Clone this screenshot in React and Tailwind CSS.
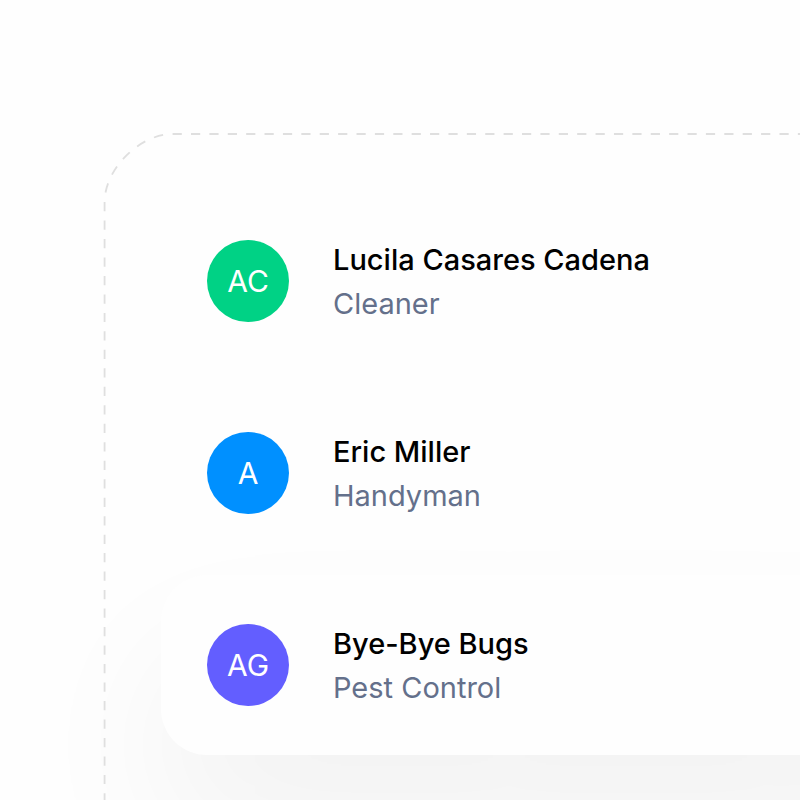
const contacts = [
  { initials: "AC", name: "Lucila Casares Cadena", role: "Cleaner", color: "bg-[#00d285]" },
  { initials: "A", name: "Eric Miller", role: "Handyman", color: "bg-[#0090ff]" },
  { initials: "AG", name: "Bye-Bye Bugs", role: "Pest Control", color: "bg-[#635eff]", raised: true },
];

function DashedOutline() {
  return (
    <svg
      aria-hidden="true"
      className="pointer-events-none absolute inset-0 size-full overflow-visible"
      fill="none"
      stroke="#dfdfdf"
      strokeWidth="1.8"
    >
      <path d="M68.6 1H4000" strokeDasharray="9.2 9.19" />
      <path
        d="M68.6 1C35.6 1 0.6 36 0.6 69"
        pathLength="110"
        strokeDasharray="10 10"
        strokeDashoffset="10"
      />
      <path d="M0.6 69V4000" strokeDasharray="9.24 9.24" />
    </svg>
  );
}

function Contact({ initials, name, role, color, raised }) {
  return (
    <li
      className={`flex items-center gap-11 rounded-[46px] py-[45px] pl-[46px] ${
        raised ? "bg-[#fefefe] shadow-[0_80px_150px_rgba(0,0,0,0.05)]" : ""
      }`}
    >
      <div
        className={`flex size-[82px] shrink-0 items-center justify-center rounded-full text-[30px] text-white ${color}`}
      >
        {initials}
      </div>
      <div className="pt-0.5 text-[29px] leading-[44px]">
        <p className="font-medium text-black">{name}</p>
        <p className="text-[#64708b]">{role}</p>
      </div>
    </li>
  );
}

export default function App() {
  return (
    <main className="flex h-screen flex-col overflow-hidden bg-[#fefefe] pt-[133px] pl-[104px] font-['Inter',sans-serif]">
      <section aria-label="Contacts" className="relative flex-1 pt-[58px] pl-[57px]">
        <ul className="-mr-80 flex flex-col gap-3">
          {contacts.map((contact) => (
            <Contact key={contact.name} {...contact} />
          ))}
        </ul>
        <DashedOutline />
      </section>
    </main>
  );
}
